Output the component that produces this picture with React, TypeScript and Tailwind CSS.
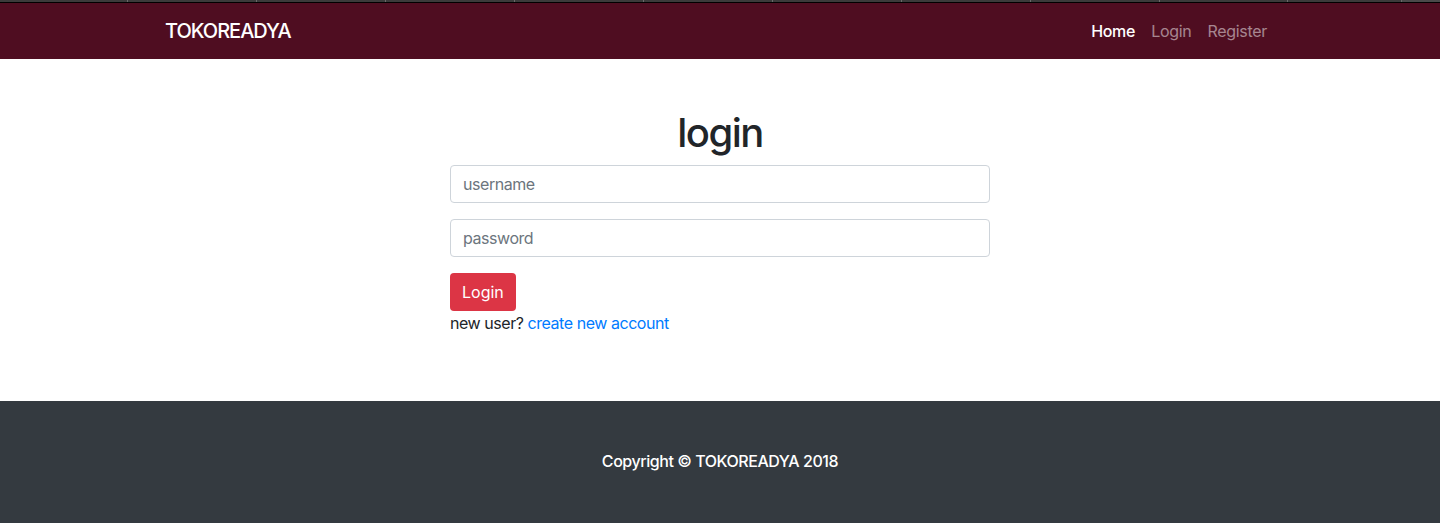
const font = { fontFamily: 'Inter, "Noto Sans", "Liberation Sans", sans-serif' }

const tabs = [128, 129, 129, 129, 129, 129, 129, 129, 129, 128, 114]

export default function App() {
  return (
    <div className="min-h-[523px] flex flex-col bg-white text-[#212529] tracking-[-0.45px]" style={font}>
      {/* browser tab strip */}
      <div className="flex h-[3px] bg-[#3b3b3b] border-b border-black">
        {tabs.map((w, i) => (
          <div key={i} className="h-[2px] border-r border-[#6a6a6a]" style={{ width: w }} />
        ))}
        <div className="flex-1 h-[2px] bg-[#4a4a4a]" />
      </div>

      <nav className="bg-[#4f0d21] h-[56px]">
        <div className="w-[1140px] mx-auto px-[15px] h-full flex items-center justify-between">
          <a className="text-white text-[20px] font-medium tracking-[-1px]">TOKOREADYA</a>
          <ul className="flex tracking-[-0.3px]">
            <li className="px-2 text-[16px] text-white font-medium">Home</li>
            <li className="px-2 text-[16px] text-white/50">Login</li>
            <li className="px-2 text-[16px] text-white/50">Register</li>
          </ul>
        </div>
      </nav>

      <main className="pt-[50px] pb-[66px]">
        <div className="w-[540px] mx-auto">
          <h1 className="text-center text-[40px] leading-[48px] font-medium mb-2 tracking-[-1.5px]">login</h1>
          <input
            placeholder="username"
            className="block w-full h-[38px] px-3 mb-4 text-[16px] border border-[#ced4da] rounded-[4px] placeholder:text-[#6c757d] outline-none"
          />
          <input
            placeholder="password"
            type="password"
            className="block w-full h-[38px] px-3 mb-4 text-[16px] border border-[#ced4da] rounded-[4px] placeholder:text-[#6c757d] outline-none"
          />
          <button className="h-[38px] px-3 bg-[#dc3545] text-white text-[16px] rounded-[4px] tracking-normal">Login</button>
          <p className="text-[16px] leading-6">
            new user? <a className="text-[#007bff]">create new account</a>
          </p>
        </div>
      </main>

      <footer className="bg-[#343a40] flex-1 pt-[48px] pb-[50px]">
        <p className="text-center text-white text-[16px] leading-6 font-medium">Copyright © TOKOREADYA 2018</p>
      </footer>
    </div>
  )
}
